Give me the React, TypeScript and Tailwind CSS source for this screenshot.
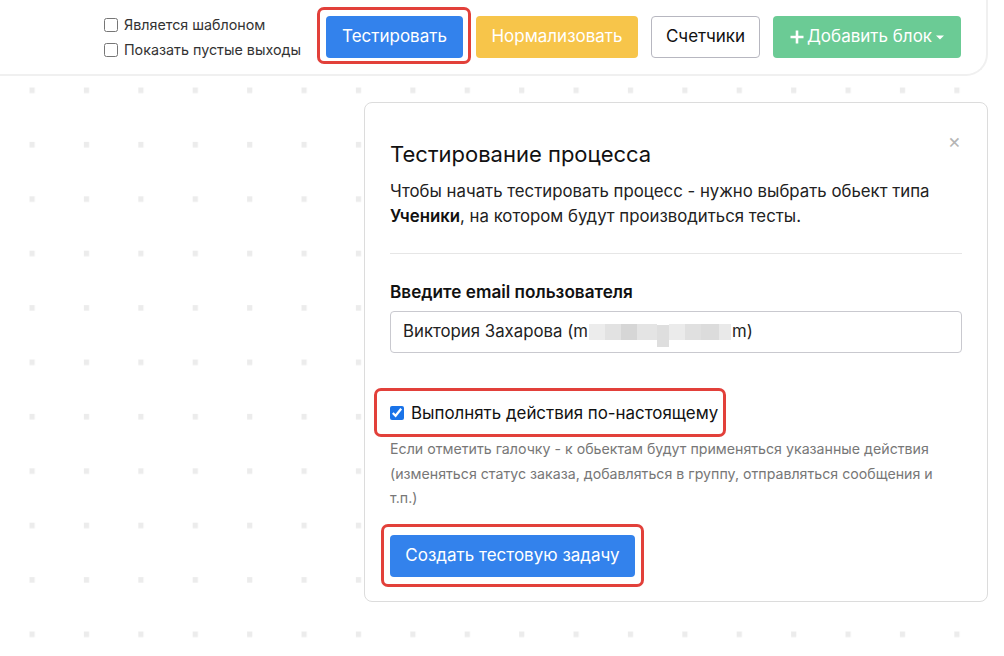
import React from "react";

const font = { fontFamily: "Inter, 'Noto Sans', sans-serif" };

function DotGrid() {
  return (
    <svg className="absolute inset-0 h-full w-full" aria-hidden="true">
      <defs>
        <pattern
          id="dots"
          width="54.4"
          height="54.4"
          patternUnits="userSpaceOnUse"
          patternTransform="translate(29.5 87.5)"
        >
          <rect x="0" y="0" width="5.2" height="5.6" fill="#ececec" />
        </pattern>
      </defs>
      <rect width="100%" height="100%" fill="url(#dots)" />
    </svg>
  );
}

function Annot({ className }: { className: string }) {
  return (
    <span
      className={
        "pointer-events-none absolute rounded-[7px] border-[3px] border-[#e2403a] " +
        className
      }
    />
  );
}

export default function App() {
  return (
    <div
      className="relative h-[656px] w-[1004px] overflow-hidden bg-white text-[#212529]"
      style={font}
    >
      <DotGrid />

      <div className="relative flex flex-col">
        {/* Header */}
        <div className="flex h-[76px] w-[988px] items-center justify-end gap-[13px] rounded-br-[22px] border-b-2 border-r-2 border-[#f0f0f0] bg-white pr-[25px]">
          <div className="mr-[12px] flex flex-col gap-[7px] text-[14.3px] text-[#333]">
            <label className="flex items-center gap-[6px] leading-[18px]">
              <input type="checkbox" className="m-0 h-[14px] w-[14px]" />
              Является шаблоном
            </label>
            <label className="flex items-center gap-[6px] leading-[18px]">
              <input type="checkbox" className="m-0 h-[14px] w-[14px]" />
              Показать пустые выходы
            </label>
          </div>
          <div className="relative">
            <button className="h-[42px] w-[137px] rounded-[4px] bg-[#3382ec] text-[17px] text-white">
              Тестировать
            </button>
            <Annot className="-left-[9px] -right-[8px] -top-[9px] -bottom-[6px]" />
          </div>
          <button className="h-[42px] w-[162px] rounded-[4px] bg-[#f7c54a] text-[17px] text-white">
            Нормализовать
          </button>
          <button className="h-[42px] w-[109px] rounded-[4px] border border-[#b7b7c0] bg-white text-[17px] text-[#111]">
            Счетчики
          </button>
          <button className="flex h-[42px] w-[188px] items-center justify-center gap-[2px] rounded-[4px] bg-[#6bcb95] text-[17px] text-white">
            <svg width="16" height="16" viewBox="0 0 16 16">
              <path d="M8 1.5v13M1.5 8h13" stroke="white" strokeWidth="2.6" />
            </svg>
            Добавить блок
            <svg width="10" height="10" viewBox="0 0 10 10" className="ml-[1px]">
              <path d="M1 3.5h8L5 7.5z" fill="white" />
            </svg>
          </button>
        </div>

        {/* Canvas area */}
        <div className="flex justify-end pr-[16px] pt-[26px]">
          <div className="relative w-[624px] rounded-[8px] border border-[#dcdcdc] bg-white px-[25px] pb-[24px] pt-[38px]">
            <span className="absolute right-[26px] top-[28px] text-[20px] leading-[20px] text-[#b5b5b5]">
              ×
            </span>
            <h2 className="text-[22px] font-normal leading-[26px] text-[#111]">
              Тестирование процесса
            </h2>
            <p className="mt-[12px] text-[16.8px] leading-[25px] text-[#222]">
              Чтобы начать тестировать процесс - нужно выбрать обьект типа{" "}
              <b className="font-semibold text-[#111]">Ученики</b>, на котором будут
              производиться тесты.
            </p>
            <div className="mt-[24px] h-px bg-[#e6e6e6]" />
            <div className="mt-[26px] text-[17.2px] font-semibold leading-[24px] text-[#111]">
              Введите email пользователя
            </div>
            <div className="mt-[7px] flex h-[42px] items-center rounded-[4px] border border-[#c9c9cf] px-[12px] text-[16.8px] text-[#222]">
              <span>Виктория Захарова (m</span>
              <span className="relative mx-[1px] inline-flex h-[22px] w-[142px] items-center gap-0 blur-[0.5px]">
                <span className="h-[16px] w-[16px] bg-[#ececec]" />
                <span className="h-[16px] w-[16px] bg-[#e2e2e2]" />
                <span className="h-[16px] w-[16px] bg-[#d6d6d6]" />
                <span className="h-[16px] w-[20px] bg-[#e4e4e4]" />
                <span className="mt-[8px] h-[22px] w-[12px] bg-[#dedede]" />
                <span className="h-[16px] w-[16px] bg-[#ebebeb]" />
                <span className="h-[16px] w-[16px] bg-[#e0e0e0]" />
                <span className="h-[16px] w-[18px] bg-[#dcdcdc]" />
                <span className="h-[16px] w-[12px] bg-[#e9e9e9]" />
              </span>
              <span>m)</span>
            </div>

            <div className="relative mt-[48px] inline-flex items-center gap-[7px]">
              <input
                type="checkbox"
                defaultChecked
                className="m-0 h-[14px] w-[14px] accent-[#1a73e8]"
              />
              <span className="text-[16.9px] leading-[24px] text-[#111]">
                Выполнять действия по-настоящему
              </span>
              <Annot className="-left-[16px] -right-[8px] -top-[13px] -bottom-[12px]" />
            </div>

            <p className="mt-[11px] w-[555px] text-[14.2px] leading-[24.5px] text-[#777]">
              Если отметить галочку - к обьектам будут применяться указанные действия
              (изменяться статус заказа, добавляться в группу, отправляться сообщения и
              т.п.)
            </p>

            <div className="relative mt-[24px] inline-block">
              <button className="h-[42px] w-[245px] rounded-[4px] bg-[#3382ec] text-[17px] text-white">
                Создать тестовую задачу
              </button>
              <Annot className="-left-[9px] -right-[9px] -top-[11px] -bottom-[10px]" />
            </div>
          </div>
        </div>
      </div>
    </div>
  );
}
